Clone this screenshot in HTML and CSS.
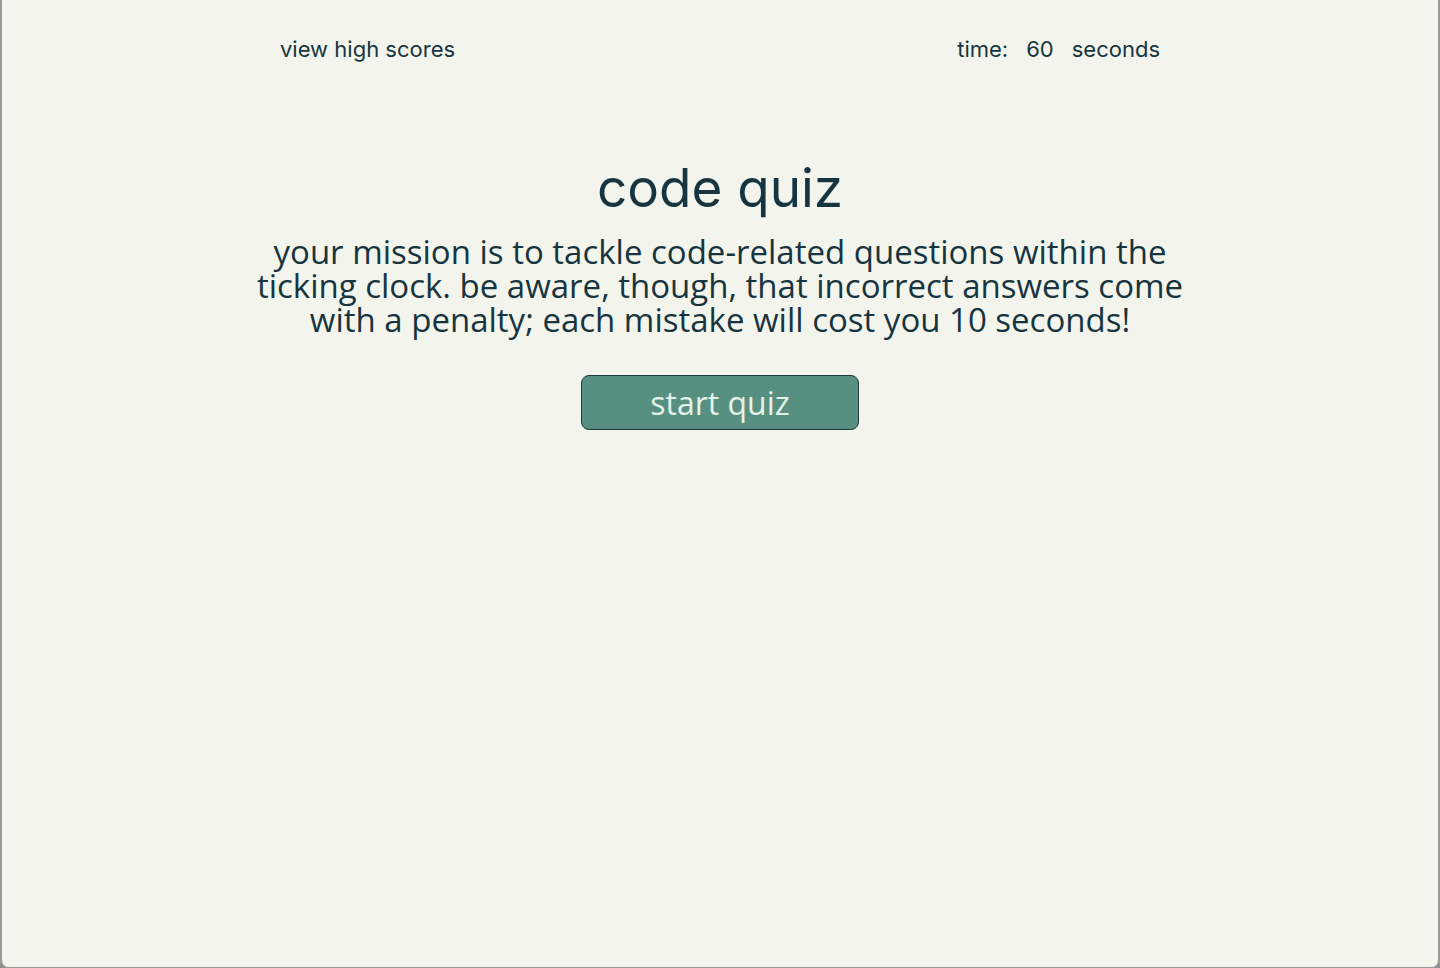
FILE: index.html
```html
<!DOCTYPE html>
<html lang="en">
<head>
<meta charset="utf-8">
<title>code quiz</title>
<link rel="stylesheet" href="styles.css">
</head>
<body>
<div class="frame">
  <header class="topbar">
    <a class="scores-link" href="#">view high scores</a>
    <div class="timer"><span>time:</span><span class="time-value">60</span><span>seconds</span></div>
  </header>
  <main class="intro">
    <h1 class="title">code quiz</h1>
    <p class="mission">your mission is to tackle code-related questions within the ticking clock. be aware, though, that incorrect answers come with a penalty; each mistake will cost you 10 seconds!</p>
    <button class="start-btn" type="button">start quiz</button>
  </main>
</div>
</body>
</html>
```
FILE: styles.css
```css
* { box-sizing: border-box; }
html, body { margin: 0; padding: 0; height: 100%; background: #8f8f8f; }
.frame {
  height: 968px;
  background: #f3f4ec;
  border-left: 2px solid #9a9a9a;
  border-right: 2px solid #9a9a9a;
  border-bottom: 1px solid #9a9a9a;
  border-radius: 0 0 8px 8px;
  color: #163540;
  overflow: hidden;
}
.topbar {
  width: 880px;
  margin: 0 auto;
  padding-top: 35px;
  display: flex;
  justify-content: space-between;
  font-family: Inter, "Liberation Sans", sans-serif;
  font-size: 22px;
  line-height: 28px;
}
.scores-link { color: #163540; text-decoration: none; }
.timer { display: flex; gap: 18px; }
.intro {
  display: flex;
  flex-direction: column;
  align-items: center;
  padding-top: 92px;
}
.title {
  margin: 0;
  font-family: Inter, "Liberation Sans", sans-serif;
  font-weight: 400;
  font-size: 53px;
  line-height: 66px;
}
.mission {
  margin: 14px 0 0;
  width: 960px;
  text-align: center;
  font-family: "Open Sans", "Liberation Sans", sans-serif;
  font-size: 33px;
  line-height: 34px;
}
.start-btn {
  margin-top: 38px;
  width: 278px;
  height: 55px;
  background: #578f80;
  border: 1px solid #1d3a40;
  border-radius: 8px;
  color: #e4f3ea;
  font-family: "Open Sans", "Liberation Sans", sans-serif;
  font-size: 32px;
  line-height: 1;
  padding: 0;
  cursor: pointer;
}
```
